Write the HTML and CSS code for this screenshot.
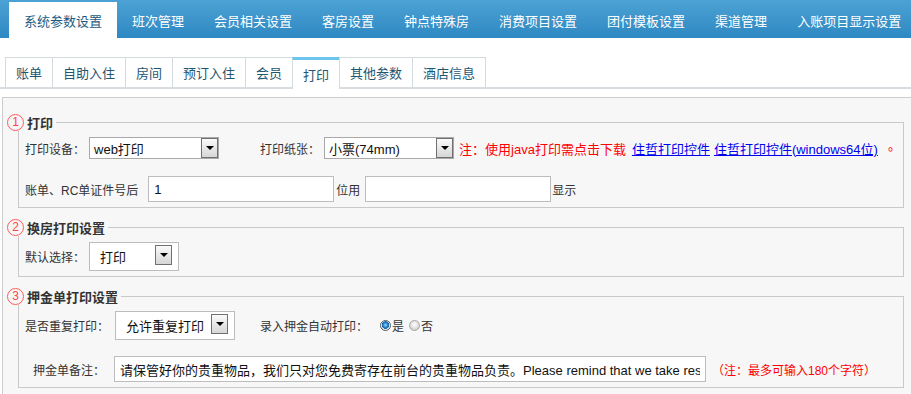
FILE: index.html
```html
<!DOCTYPE html>
<html lang="zh-CN">
<head>
<meta charset="utf-8">
<title>系统参数设置 - 打印</title>
<link rel="stylesheet" href="styles.css">
</head>
<body>
<div class="topnav">
  <ul class="topnav-list">
    <li class="topnav-item on">系统参数设置</li>
    <li class="topnav-item">班次管理</li>
    <li class="topnav-item">会员相关设置</li>
    <li class="topnav-item">客房设置</li>
    <li class="topnav-item">钟点特殊房</li>
    <li class="topnav-item">消费项目设置</li>
    <li class="topnav-item">团付模板设置</li>
    <li class="topnav-item">渠道管理</li>
    <li class="topnav-item">入账项目显示设置</li>
  </ul>
</div>

<div class="subtabs">
  <ul class="subtabs-list">
    <li class="subtab">账单</li>
    <li class="subtab">自助入住</li>
    <li class="subtab">房间</li>
    <li class="subtab">预订入住</li>
    <li class="subtab">会员</li>
    <li class="subtab on">打印</li>
    <li class="subtab">其他参数</li>
    <li class="subtab last">酒店信息</li>
  </ul>
</div>

<div class="panel">
  <fieldset class="grp grp-first">
    <legend class="grp-legend"><span class="num">1</span><span class="ttl">打印</span></legend>
    <div class="row row-sel">
      <span class="lbl">打印设备：</span>
      <div class="sel sel-a"><span class="sel-text">web打印</span><span class="btn"><i class="tri"></i></span></div>
      <span class="lbl lbl-gap">打印纸张：</span>
      <div class="sel sel-b"><span class="sel-text">小票(74mm)</span><span class="btn"><i class="tri"></i></span></div>
      <span class="note">注：使用java打印需点击下载</span>
      <a class="lnk lnk-1" href="#">住哲打印控件</a>
      <a class="lnk lnk-2" href="#">住哲打印控件(windows64位)</a>
      <span class="note dot">。</span>
    </div>
    <div class="row row-inp">
      <span class="lbl">账单、RC单证件号后</span>
      <input class="inp inp-num" type="text" value="1">
      <span class="lbl lbl-mid">位用</span>
      <input class="inp inp-rep" type="text" value="">
      <span class="lbl lbl-end">显示</span>
    </div>
  </fieldset>

  <fieldset class="grp">
    <legend class="grp-legend"><span class="num">2</span><span class="ttl">换房打印设置</span></legend>
    <div class="row row-wrap">
      <span class="lbl">默认选择：</span>
      <div class="selw selw-a"><span class="sel-text">打印</span><span class="btn"><i class="tri"></i></span></div>
    </div>
  </fieldset>

  <fieldset class="grp">
    <legend class="grp-legend"><span class="num">3</span><span class="ttl">押金单打印设置</span></legend>
    <div class="row row-wrap">
      <span class="lbl">是否重复打印：</span>
      <div class="selw selw-b"><span class="sel-text">允许重复打印</span><span class="btn"><i class="tri"></i></span></div>
      <span class="lbl lbl-auto">录入押金自动打印：</span>
      <span class="radio radio-on"></span><span class="lbl">是</span>
      <span class="radio radio-off"></span><span class="lbl">否</span>
    </div>
    <div class="row row-inp row-memo">
      <span class="lbl">押金单备注：</span>
      <input class="inp inp-memo" type="text" value="请保管好你的贵重物品，我们只对您免费寄存在前台的贵重物品负责。Please remind that we take responsibility only for the valuables deposited at the front desk.">
      <span class="note note-small">（注：最多可输入180个字符）</span>
    </div>
  </fieldset>
</div>
</body>
</html>
```

FILE: styles.css
```css
html, body {
  margin: 0;
  padding: 0;
  background: #fff;
  overflow: hidden;
}

body {
  font-family: "Liberation Sans", "Noto Sans CJK SC", sans-serif;
  font-size: 12px;
  color: #333;
}

ul {
  list-style: none;
  margin: 0;
  padding: 0;
}

/* ---------- top navigation ---------- */
.topnav {
  height: 38px;
  background: linear-gradient(to bottom, #4ca2d4, #2e88c2);
  box-sizing: border-box;
  padding: 2px 0 0 9px;
}

.topnav-list {
  display: flex;
  height: 36px;
}

.topnav-item {
  padding: 0 15px;
  line-height: 37px;
  font-size: 13px;
  color: #fff;
  white-space: nowrap;
  font-family: "Noto Sans CJK SC", sans-serif;
}

.topnav-item.on {
  background: #fff;
  color: #1d5b84;
}

/* ---------- sub tabs ---------- */
.subtabs {
  margin-top: 19px;
  height: 30px;
  border-bottom: 2px solid #d7dde0;
}

.subtabs-list {
  display: flex;
  align-items: flex-start;
  margin-left: 5px;
}

.subtab {
  height: 30px;
  box-sizing: border-box;
  border-top: 1px solid #d3dbdf;
  border-left: 1px solid #d3dbdf;
  padding: 0 10px;
  line-height: 29px;
  font-size: 13px;
  color: #1f5672;
  background: #fff;
  font-family: "Noto Sans CJK SC", sans-serif;
}

.subtab.last {
  border-right: 1px solid #d3dbdf;
}

.subtab.on {
  height: 32px;
  border-top: 3px solid #6cc5ee;
  line-height: 29px;
  color: #1f5672;
}

/* ---------- panel ---------- */
.panel {
  margin: 8px 0 0 2px;
  width: 930px;
  border: 1px solid #cdcdcd;
  background: #f7f7f7;
  padding: 0 0 20px 0;
}

.grp {
  margin: 10px 0 0 15px;
  width: 886px;
  box-sizing: border-box;
  min-width: 0;
  border: 1px solid #c9c9c9;
  padding: 6px 0 5px 6px;
}

.grp-first {
  margin-top: 15px;
}

.grp-legend {
  display: flex;
  align-items: center;
  height: 18px;
  padding: 0 3px 0 0;
  margin-left: -18px;
}

.num {
  width: 15px;
  height: 15px;
  border: 1px solid #ff5a5a;
  border-radius: 50%;
  color: #ff4545;
  font-size: 12px;
  line-height: 15px;
  text-align: center;
  font-family: "Liberation Sans", sans-serif;
}

.ttl {
  margin-left: 3px;
  font-size: 13px;
  font-weight: bold;
  color: #333;
  font-family: "Noto Sans CJK SC", sans-serif;
}

/* ---------- rows ---------- */
.row {
  display: flex;
  align-items: center;
  white-space: nowrap;
}

.row-sel {
  height: 22px;
}

.row-inp {
  height: 26px;
  margin-top: 17px;
}

.row-wrap {
  height: 29px;
}

.row-memo {
  margin-top: 16px;
  padding-left: 8px;
}

.lbl {
  font-size: 12px;
  color: #333;
}

.lbl-gap {
  margin-left: 41px;
}

.lbl-mid {
  margin-left: 2px;
}

.lbl-end {
  margin-left: 1px;
}

.lbl-auto {
  margin-left: 25px;
}

/* ---------- select imitation ---------- */
.sel {
  margin-left: 4px;
  width: 130px;
  height: 22px;
  box-sizing: border-box;
  border: 1px solid #a9a9a9;
  background: #fff;
  display: flex;
  align-items: center;
  padding-left: 4px;
}

.sel-text {
  font-size: 13px;
  color: #111;
}

.btn {
  margin-left: auto;
  width: 17px;
  height: 20px;
  box-sizing: border-box;
  border: 1px solid #707070;
  background: linear-gradient(to bottom, #fafafa, #d6d6d6);
  display: flex;
  align-items: center;
  justify-content: center;
}

.tri {
  width: 0;
  height: 0;
  border-left: 4px solid transparent;
  border-right: 4px solid transparent;
  border-top: 4px solid #000;
}

.selw {
  margin-left: 4px;
  height: 29px;
  box-sizing: border-box;
  border: 1px solid #bcbcbc;
  background: #fff;
  display: flex;
  align-items: center;
  padding: 0 6px 0 10px;
}

.selw .btn {
  margin-bottom: 3px;
}

.selw-a {
  width: 90px;
}

.selw-b {
  margin-left: 6px;
  width: 120px;
}

/* ---------- notes / links ---------- */
.note {
  margin-left: 5px;
  font-size: 13px;
  color: #f00;
}

.note.dot {
  margin-left: 6px;
  font-family: "Noto Sans CJK TC", sans-serif;
}

.note-small {
  margin-left: 6px;
  font-size: 12px;
}

.lnk {
  font-size: 13px;
  color: #0000f0;
  text-decoration: underline;
}

.lnk-1 {
  margin-left: 6px;
}

.lnk-2 {
  margin-left: 4px;
}

/* ---------- inputs ---------- */
.inp {
  height: 26px;
  box-sizing: border-box;
  border: 1px solid #bdbdbd;
  background: #fff;
  padding: 0 5px;
  margin: 0;
  font-family: "Liberation Sans", "Noto Sans CJK SC", sans-serif;
  font-size: 13px;
  color: #111;
  outline: none;
}

.inp-num {
  margin-left: 10px;
  width: 186px;
}

.inp-rep {
  margin-left: 5px;
  width: 186px;
}

.inp-memo {
  margin-left: 9px;
  width: 592px;
}

/* ---------- radios ---------- */
.radio {
  width: 11px;
  height: 11px;
  box-sizing: border-box;
  border-radius: 50%;
  margin-right: 1px;
}

.radio-on {
  margin-left: 12px;
  border: 1px solid #4a5d6b;
  background: radial-gradient(circle at 50% 45%, #9fdcff 0, #2c8ed6 2px, #155f9e 3.5px, #e8eef2 4px);
}

.radio-off {
  margin-left: 5px;
  border: 1px solid #a6a6a6;
  background: radial-gradient(circle at 50% 40%, #ffffff 0, #e6e6e6 3px, #d2d2d2 5px);
}
```
